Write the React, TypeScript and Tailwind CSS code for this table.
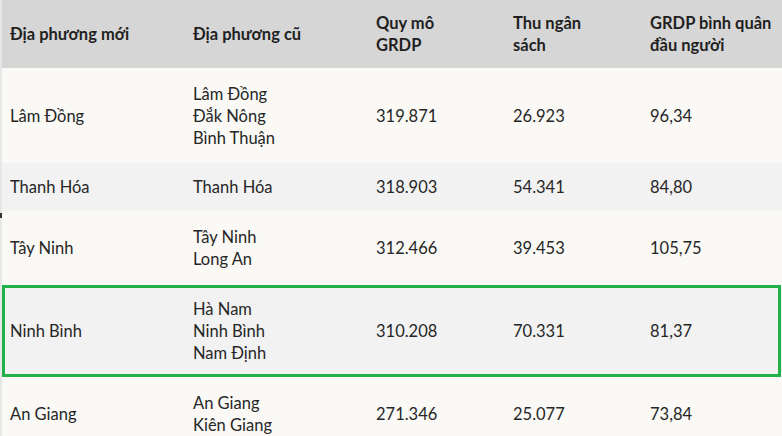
const rows = [
  { moi: 'Lâm Đồng', cu: ['Lâm Đồng', 'Đắk Nông', 'Bình Thuận'], grdp: '319.871', thu: '26.923', bq: '96,34', h: 'h-[95px]', bg: 'bg-[#faf9f5]' },
  { moi: 'Thanh Hóa', cu: ['Thanh Hóa'], grdp: '318.903', thu: '54.341', bq: '84,80', h: 'h-[48px]', bg: 'bg-[#f2f2f2]' },
  { moi: 'Tây Ninh', cu: ['Tây Ninh', 'Long An'], grdp: '312.466', thu: '39.453', bq: '105,75', h: 'h-[74px]', bg: 'bg-[#faf9f5]' },
  { moi: 'Ninh Bình', cu: ['Hà Nam', 'Ninh Bình', 'Nam Định'], grdp: '310.208', thu: '70.331', bq: '81,37', h: 'h-[92px]', bg: 'bg-[#f2f2f2]', mark: true },
  { moi: 'An Giang', cu: ['An Giang', 'Kiên Giang'], grdp: '271.346', thu: '25.077', bq: '73,84', h: 'h-[74px]', bg: 'bg-[#faf9f5]' },
];

const cols = 'grid grid-cols-[183px_183px_137px_137px_1fr]';

export default function App() {
  return (
    <div className="h-[436px] w-[782px] overflow-hidden bg-white font-['Lato','Noto_Sans',sans-serif] text-[16.5px] leading-[22px] text-[#262626]">
      <div className="relative border-l-2 border-[#e6e6e6]">
        <div className="absolute left-[-2px] top-[213px] h-[5px] w-[2px] bg-[#333]" />
        <div className={`${cols} h-[68px] items-center bg-[#d6d6d6] font-bold text-[#1f1f1f]`}>
          <div className="pl-2">Địa phương mới</div>
          <div className="pl-2">Địa phương cũ</div>
          <div className="pl-2">Quy mô<br />GRDP</div>
          <div className="pl-2">Thu ngân<br />sách</div>
          <div className="pl-2">GRDP bình quân<br />đầu người</div>
        </div>
        {rows.map((r) => (
          <div key={r.moi} className={`relative ${cols} ${r.h} ${r.bg} items-center`}>
            <div className="pl-2">{r.moi}</div>
            <div className="pl-2">
              {r.cu.map((c) => (
                <div key={c}>{c}</div>
              ))}
            </div>
            <div className="pl-2">{r.grdp}</div>
            <div className="pl-2">{r.thu}</div>
            <div className="pl-2">{r.bq}</div>
            {r.mark && <div className="pointer-events-none absolute inset-0 right-[1px] border-[3.5px] border-[#22b04b]" />}
          </div>
        ))}
      </div>
    </div>
  );
}
